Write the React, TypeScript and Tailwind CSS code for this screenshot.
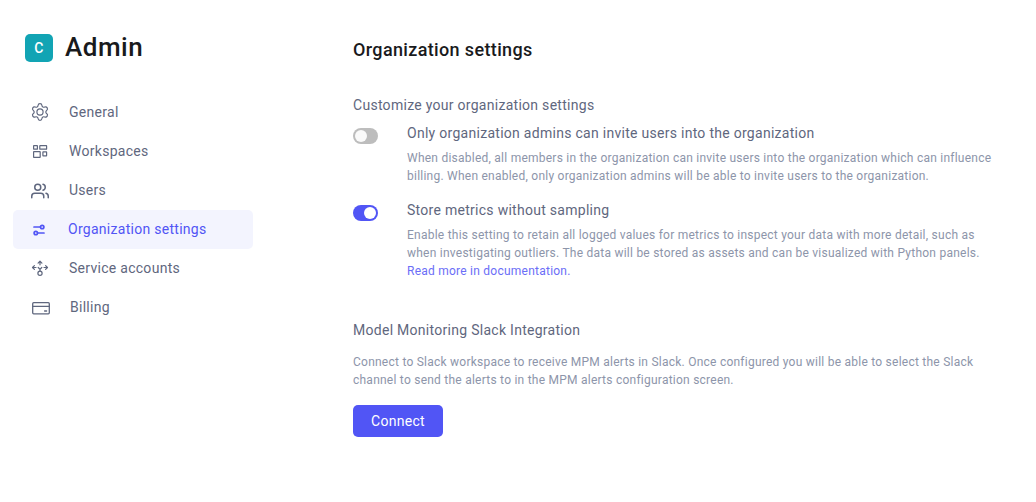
import React from "react";

type NavItem = { label: string; pad: string; icon: React.ReactNode; active?: boolean };

const line = { fill: "none", stroke: "currentColor", strokeWidth: 1.2, strokeLinecap: "round", strokeLinejoin: "round" } as const;

function GearIcon() {
  return (
    <svg className="mb-px" width="18" height="18" viewBox="1.200 1.200 21.600 21.600" {...line} strokeWidth={1.4}>
      <path d="M9.671 4.136a2.34 2.34 0 0 1 4.659 0 2.34 2.34 0 0 0 3.319 1.915 2.34 2.34 0 0 1 2.33 4.033 2.34 2.34 0 0 0 0 3.831 2.34 2.34 0 0 1-2.33 4.033 2.34 2.34 0 0 0-3.319 1.915 2.34 2.34 0 0 1-4.659 0 2.34 2.34 0 0 0-3.32-1.915 2.34 2.34 0 0 1-2.33-4.033 2.34 2.34 0 0 0 0-3.831A2.34 2.34 0 0 1 6.35 6.051a2.34 2.34 0 0 0 3.319-1.915" />
      <circle cx="12" cy="12" r="3.7" />
    </svg>
  );
}

function WorkspacesIcon() {
  return (
    <svg className="mb-px" width="18" height="18" viewBox="0 0 18 18" {...line}>
      <rect x="2.6" y="3.6" width="3.8" height="3.6" rx="0.3" />
      <rect x="8.8" y="3.6" width="6.8" height="3.6" rx="0.3" />
      <rect x="2.6" y="9.7" width="6.6" height="5.7" rx="0.3" />
      <rect x="11.9" y="9.9" width="3.7" height="3.9" rx="0.3" />
    </svg>
  );
}

function UsersIcon() {
  return (
    <svg width="18" height="18" viewBox="0 0 24 24" {...line} strokeWidth={2}>
      <path d="M17 21v-2a4 4 0 0 0-4-4H5a4 4 0 0 0-4 4v2M23 21v-2a4 4 0 0 0-3-3.87M16 3.13a4 4 0 0 1 0 7.75" />
      <circle cx="9" cy="7" r="4" />
    </svg>
  );
}

function SlidersIcon() {
  return (
    <svg className="mb-px" width="18" height="18" viewBox="0 0 18 18" {...line} strokeWidth={1.7}>
      <path d="M4 7h6M8 13h6" />
      <circle cx="12.2" cy="7" r="1.7" />
      <circle cx="5.8" cy="13" r="1.7" />
    </svg>
  );
}

function ServiceIcon() {
  return (
    <svg className="mb-px" width="18" height="18" viewBox="0 0 18 18" {...line}>
      <path d="M9 5.8V2.3M7.1 4.1L9 2.2l1.9 1.9M5 8.500H1.600M3.400 6.600L1.500 8.500l1.900 1.900M13 8.500h3.400M14.600 6.600l1.900 1.900-1.900 1.900M9 12v-1.800M7.200 8.500L9 10.200l1.800-1.700" />
      <circle cx="9" cy="14.3" r="2.1" />
    </svg>
  );
}

function CardIcon() {
  return (
    <svg className="mb-px" width="18" height="18" viewBox="0 0 18 18" {...line} strokeWidth={1.3}>
      <rect x="0.7" y="4.7" width="16.6" height="11.1" rx="1" />
      <path d="M0.7 8.3h16.6M12.6 13h2" />
    </svg>
  );
}

const items: NavItem[] = [
  { label: "General", pad: "pl-[18px] gap-5", icon: <GearIcon /> },
  { label: "Workspaces", pad: "pl-[18px] gap-5", icon: <WorkspacesIcon /> },
  { label: "Users", pad: "pl-[18px] gap-5", icon: <UsersIcon /> },
  { label: "Organization settings", pad: "pl-[17px] gap-5", icon: <SlidersIcon />, active: true },
  { label: "Service accounts", pad: "pl-[18px] gap-5", icon: <ServiceIcon /> },
  { label: "Billing", pad: "pl-[19px] gap-5", icon: <CardIcon /> },
];

function Toggle({ on }: { on?: boolean }) {
  return (
    <span className={`mt-1 flex h-4 w-[25px] shrink-0 items-center rounded-full px-[2px] ${on ? "justify-end bg-[#5155f5]" : "justify-start bg-[#bdbdbd]"}`}>
      <span className={`size-3 rounded-full ${on ? "bg-white" : "bg-[#fafafa]"}`} />
    </span>
  );
}

export default function App() {
  return (
    <div className="flex h-[502px] w-[1036px] bg-white font-['Roboto',sans-serif] text-[14px] text-[#5f677e]">
      <aside className="w-[353px] shrink-0 pt-[30px] pl-[13px]">
        <div className="flex h-9 items-center gap-3 pl-3">
          <span className="flex size-7 items-center justify-center rounded-[5px] bg-[#12a4b4] text-[14px] font-medium tracking-[0.02em] text-white">C</span>
          <h1 className="pb-[2px] text-[26px] leading-[34px] font-medium tracking-[0.02em] text-[#191a1c]">Admin</h1>
        </div>
        <nav className="mt-[27px] w-60">
          {items.map((it) => (
            <a key={it.label} className={`flex h-[39px] items-center rounded-[5px] tracking-[0.02em] ${it.pad} ${it.active ? "bg-[#f3f4fe] text-[#5155f5]" : ""}`}>
              {it.icon}
              <span className="whitespace-nowrap">{it.label}</span>
            </a>
          ))}
        </nav>
      </aside>
      <main className="w-[660px] pt-[38px]">
        <h2 className="text-[18px] leading-6 font-medium tracking-[0.02em] text-[#191a1c]">Organization settings</h2>
        <p className="mt-8 leading-[22px] tracking-[0.02em]">Customize your organization settings</p>
        <section className="mt-2 flex gap-[29px]">
          <Toggle />
          <div className="whitespace-nowrap">
            <h3 className="leading-[18px] tracking-[0.02em]">Only organization admins can invite users into the organization</h3>
            <p className="mt-[7px] text-[12px] leading-[18px] tracking-[0.02em] text-[#8d95aa]">
              When disabled, all members in the organization can invite users into the organization which can influence
              <br />
              billing. When enabled, only organization admins will be able to invite users to the organization.
            </p>
          </div>
        </section>
        <section className="mt-4 flex gap-[29px]">
          <Toggle on />
          <div className="whitespace-nowrap">
            <h3 className="leading-[18px] tracking-[0.02em]">Store metrics without sampling</h3>
            <p className="mt-[7px] text-[12px] leading-[18px] tracking-[0.02em] text-[#8d95aa]">
              Enable this setting to retain all logged values for metrics to inspect your data with more detail, such as
              <br />
              when investigating outliers. The data will be stored as assets and can be visualized with Python panels.
              <br />
              <a className="text-[#6b6ef7]">Read more in documentation.</a>
            </p>
          </div>
        </section>
        <h3 className="mt-[41px] leading-[18px] tracking-[0.02em]">Model Monitoring Slack Integration</h3>
        <p className="mt-[14px] text-[12px] leading-[18px] tracking-[0.02em] whitespace-nowrap text-[#8d95aa]">
          Connect to Slack workspace to receive MPM alerts in Slack. Once configured you will be able to select the Slack
          <br />
          channel to send the alerts to in the MPM alerts configuration screen.
        </p>
        <button className="mt-4 flex h-8 w-[90px] items-center justify-center rounded-[5px] bg-[#5155f5] tracking-[0.02em] text-white">Connect</button>
      </main>
    </div>
  );
}
